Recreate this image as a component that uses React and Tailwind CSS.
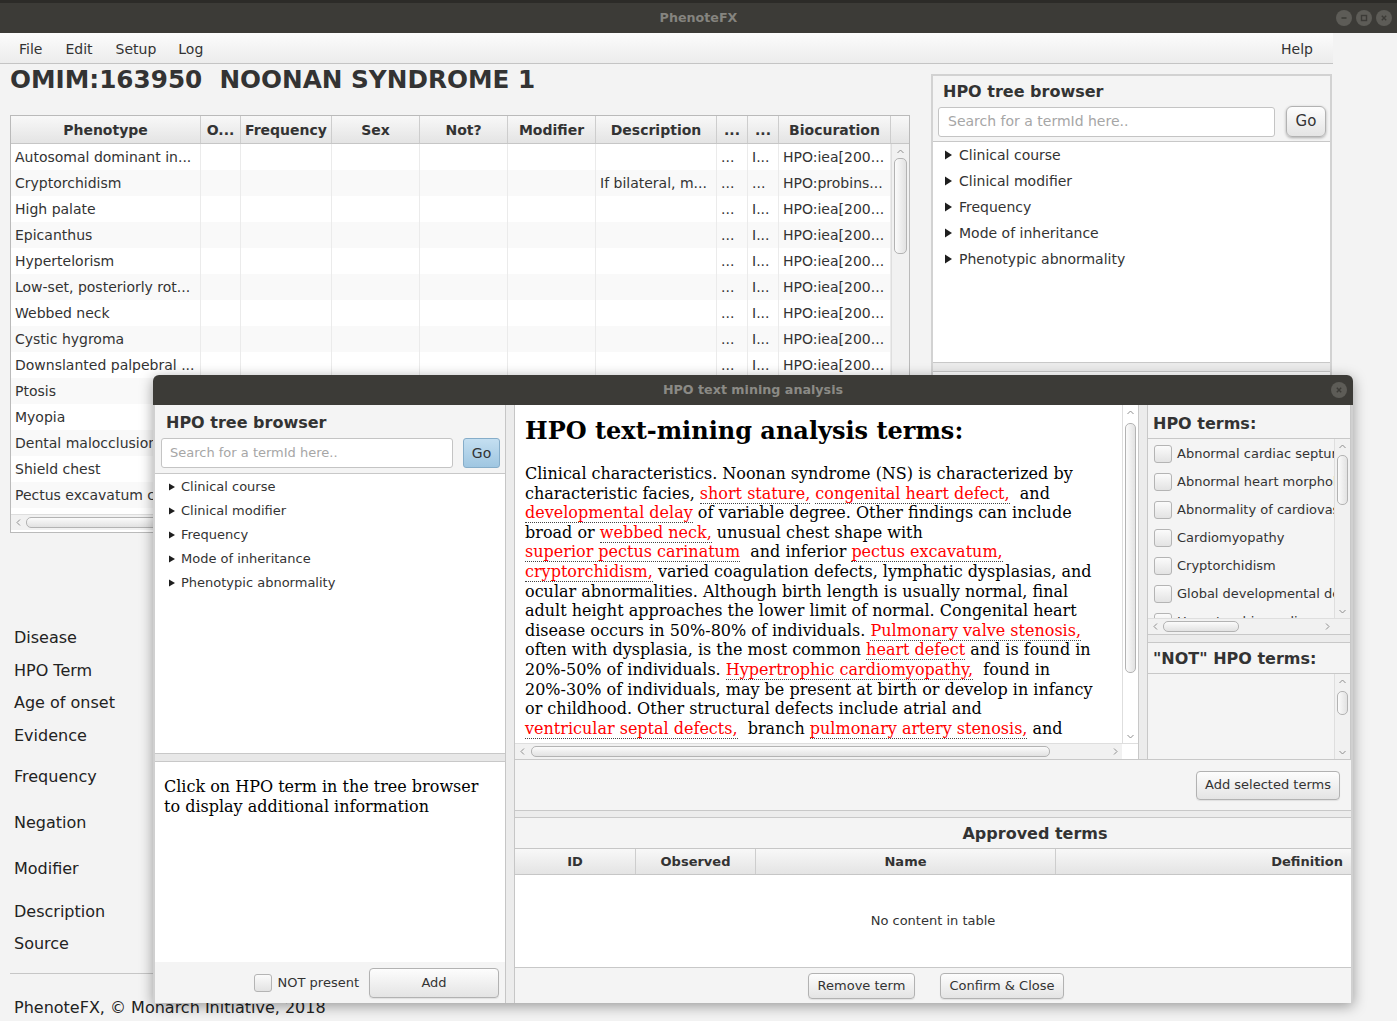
import React from "react";

function Chev({ d, c = "#8f8f8f" }) {
  const p = {
    up: "M1.5 6 L4.5 3 L7.5 6",
    down: "M1.5 3 L4.5 6 L7.5 3",
    left: "M6 1.5 L3 4.5 L6 7.5",
    right: "M3 1.5 L6 4.5 L3 7.5",
  }[d];
  return (
    <svg width="9" height="9" viewBox="0 0 9 9">
      <path d={p} fill="none" stroke={c} strokeWidth="1" />
    </svg>
  );
}

function Tri({ big }) {
  return big ? (
    <svg width="7" height="10" viewBox="0 0 7 10">
      <polygon points="0,0.5 7,5 0,9.5" fill="#1e1e1e" />
    </svg>
  ) : (
    <svg width="6" height="8" viewBox="0 0 6 8">
      <polygon points="0,0.5 6,4 0,7.5" fill="#1e1e1e" />
    </svg>
  );
}

function VScroll({ thumb, cls = "" }) {
  return (
    <div className={`w-[16px] shrink-0 flex flex-col bg-[#f1f1f1] border-l border-[#dedede] ${cls}`}>
      <div className="h-[14px] flex items-center justify-center">
        <Chev d="up" />
      </div>
      <div className="flex-1 px-[2px]">
        <div className={`rounded-[5px] border border-[#b3b3b3] bg-gradient-to-r from-[#fbfbfb] to-[#e2e2e2] ${thumb}`} />
      </div>
      <div className="h-[14px] flex items-center justify-center">
        <Chev d="down" />
      </div>
    </div>
  );
}

function HScroll({ thumb, corner = "bg-[#f1f1f1]", cornerW = "w-[16px]" }) {
  return (
    <div className="h-[16px] shrink-0 flex bg-[#f1f1f1] border-t border-[#dedede]">
      <div className="w-[14px] flex items-center justify-center">
        <Chev d="left" />
      </div>
      <div className="flex-1 min-w-0 py-[2px] overflow-hidden">
        <div className={`h-full rounded-[5px] border border-[#b3b3b3] bg-gradient-to-b from-[#fbfbfb] to-[#e2e2e2] ${thumb}`} />
      </div>
      <div className="w-[14px] flex items-center justify-center">
        <Chev d="right" />
      </div>
      <div className={`${cornerW} shrink-0 ${corner}`} />
    </div>
  );
}

function Circle({ kind }) {
  return (
    <div className="w-[16px] h-[16px] rounded-full bg-[#5d5c57] flex items-center justify-center">
      <svg width="10" height="10" viewBox="0 0 10 10">
        {kind === "min" && <path d="M2.5 5 H7.5" stroke="#3c3b37" strokeWidth="1.6" />}
        {kind === "max" && <rect x="2.5" y="2.5" width="5" height="5" fill="none" stroke="#3c3b37" strokeWidth="1.4" />}
        {kind === "close" && <path d="M2.8 2.8 L7.2 7.2 M7.2 2.8 L2.8 7.2" stroke="#3c3b37" strokeWidth="1.4" />}
      </svg>
    </div>
  );
}

function Checkbox() {
  return (
    <div className="w-[18px] h-[18px] shrink-0 rounded-[3px] border border-[#b4b4b4] bg-gradient-to-b from-[#fbfbfb] to-[#e3e3e3]" />
  );
}

const btn =
  "rounded-[4px] border border-[#b2b2b2] bg-gradient-to-b from-[#fdfdfd] to-[#e4e4e4] shadow-[0_1px_1px_rgba(0,0,0,0.08)] flex items-center justify-center text-[#333] shrink-0";

const colW = [
  "w-[190px]",
  "w-[40px]",
  "w-[91px]",
  "w-[88px]",
  "w-[88px]",
  "w-[88px]",
  "w-[121px]",
  "w-[31px]",
  "w-[31px]",
  "w-[112px]",
];
const headers = ["Phenotype", "O...", "Frequency", "Sex", "Not?", "Modifier", "Description", "...", "...", "Biocuration"];

const rows = [
  ["Autosomal dominant in...", "", "...", "I...", "HPO:iea[200..."],
  ["Cryptorchidism", "If bilateral, m...", "...", "...", "HPO:probins..."],
  ["High palate", "", "...", "I...", "HPO:iea[200..."],
  ["Epicanthus", "", "...", "I...", "HPO:iea[200..."],
  ["Hypertelorism", "", "...", "I...", "HPO:iea[200..."],
  ["Low-set, posteriorly rot...", "", "...", "I...", "HPO:iea[200..."],
  ["Webbed neck", "", "...", "I...", "HPO:iea[200..."],
  ["Cystic hygroma", "", "...", "I...", "HPO:iea[200..."],
  ["Downslanted palpebral ...", "", "...", "I...", "HPO:iea[200..."],
  ["Ptosis", "", "...", "I...", "HPO:iea[200..."],
  ["Myopia", "", "...", "I...", "HPO:iea[200..."],
  ["Dental malocclusion", "", "...", "I...", "HPO:iea[200..."],
  ["Shield chest", "", "...", "I...", "HPO:iea[200..."],
  ["Pectus excavatum c...", "", "...", "I...", "HPO:iea[200..."],
  ["", "", "", "", ""],
];

function MainTable() {
  return (
    <div className="w-[900px] h-[418px] border border-[#bababa] bg-white flex flex-col">
      <div className="h-[28px] shrink-0 flex border-b border-[#c6c6c6] bg-gradient-to-b from-[#f8f8f8] to-[#e4e4e4]">
        {headers.map((h, i) => (
          <div
            key={i}
            className={`${colW[i]} shrink-0 border-r border-[#cdcdcd] flex items-center justify-center pt-[2px] text-[14px] font-bold text-[#333] whitespace-nowrap overflow-hidden`}
          >
            {h}
          </div>
        ))}
        <div className="flex-1" />
      </div>
      <div className="h-[370px] shrink-0 flex">
        <div className="w-[880px] overflow-hidden">
          {rows.map((r, ri) => {
            const cells = [r[0], "", "", "", "", "", r[1], r[2], r[3], r[4]];
            return (
              <div key={ri} className={`h-[26px] flex ${ri % 2 === 0 ? "bg-white" : "bg-[#f9f9f9]"}`}>
                {cells.map((c, ci) => (
                  <div
                    key={ci}
                    className={`${colW[ci]} shrink-0 border-r border-[#ebebeb] pl-[4px] text-[14px] leading-[26px] text-[#333] whitespace-nowrap overflow-hidden`}
                  >
                    {c}
                  </div>
                ))}
              </div>
            );
          })}
        </div>
        <VScroll thumb="h-[96px]" cls="w-[18px]" />
      </div>
      <HScroll thumb="ml-[1px] w-[720px]" cornerW="w-[18px]" />
    </div>
  );
}

function RightPanel() {
  const items = ["Clinical course", "Clinical modifier", "Frequency", "Mode of inheritance", "Phenotypic abnormality"];
  return (
    <div className="mt-[10px] ml-[11px] w-[401px] h-[920px] border-2 border-[#d2d2d2] bg-[#f4f4f4] flex flex-col">
      <div className="h-[30px] flex items-center pl-[10px] pt-[2px] text-[16px] font-bold text-[#333]">HPO tree browser</div>
      <div className="h-[31px] flex items-center pl-[5px]">
        <div className="w-[337px] h-[30px] rounded-[3px] border border-[#c4c4c4] bg-white flex items-center pl-[9px] text-[14px] text-[#a6a6a6]">
          Search for a termId here..
        </div>
        <div className={`${btn} ml-[11px] w-[40px] h-[31px] rounded-[6px] shadow-[0_1px_3px_rgba(0,0,0,0.3)] text-[15px] text-[#111]`}>Go</div>
      </div>
      <div className="mt-[4px] h-[222px] bg-white border-y border-[#c8c8c8]">
        {items.map((t) => (
          <div key={t} className="h-[26px] flex items-center pl-[12px] gap-[7px] text-[14px] text-[#333]">
            <Tri big />
            <span>{t}</span>
          </div>
        ))}
      </div>
      <div className="h-[9px] bg-[#ebebeb] border-b border-[#c8c8c8]" />
      <div className="flex-1 bg-white" />
    </div>
  );
}

function MainWindow() {
  return (
    <div className="w-[1333px]">
      <div className="h-[31px] border-b border-[#c4c4c4] bg-gradient-to-b from-[#fcfcfc] to-[#ececec] flex items-center pt-[2px] text-[14px] text-[#333]">
        <span className="ml-[19px]">File</span>
        <span className="ml-[23px]">Edit</span>
        <span className="ml-[23px]">Setup</span>
        <span className="ml-[22px]">Log</span>
        <span className="ml-auto mr-[20px]">Help</span>
      </div>
      <div className="flex">
        <div className="w-[920px] pl-[10px] shrink-0">
          <div className="h-[30px] leading-[30px] pt-[1px] text-[24.7px] font-bold text-[#333] whitespace-pre">
            OMIM:163950  NOONAN SYNDROME 1
          </div>
          <div className="mt-[21px]">
            <MainTable />
          </div>
          <div className="pl-[4px] text-[16px] leading-[20px] text-[#222]">
            <div className="mt-[95px]">Disease</div>
            <div className="mt-[13px]">HPO Term</div>
            <div className="mt-[12px]">Age of onset</div>
            <div className="mt-[13px]">Evidence</div>
            <div className="mt-[21px]">Frequency</div>
            <div className="mt-[26px]">Negation</div>
            <div className="mt-[26px]">Modifier</div>
            <div className="mt-[23px]">Description</div>
            <div className="mt-[12px]">Source</div>
          </div>
          <div className="mt-[19px] h-px w-[900px] bg-[#c6c6c6]" />
          <div className="mt-[24px] pl-[4px] text-[16px] leading-[20px] text-[#222]">
            PhenoteFX, © Monarch Initiative, 2018
          </div>
        </div>
        <RightPanel />
      </div>
    </div>
  );
}

function R({ children }) {
  return <span className="text-[#ff0000] border-b border-dotted border-[#444]">{children}</span>;
}

function WebView() {
  return (
    <div className="w-[623px] shrink-0 flex flex-col bg-white">
      <div className="flex-1 flex min-h-0">
        <div className="flex-1 min-w-0 overflow-hidden pl-[10px] pt-[11px] font-['DejaVu_Serif',serif] text-black">
          <div className="h-[30px] leading-[30px] text-[24px] font-bold whitespace-nowrap">HPO text-mining analysis terms:</div>
          <div className="mt-[18px] text-[16px] leading-[19.6px] whitespace-pre">
            <div>Clinical characteristics. Noonan syndrome (NS) is characterized by</div>
            <div>
              characteristic facies, <R>short stature,</R> <R>congenital heart defect,</R>{"  and"}
            </div>
            <div>
              <R>developmental delay</R> of variable degree. Other findings can include
            </div>
            <div>
              broad or <R>webbed neck,</R> unusual chest shape with
            </div>
            <div>
              <R>superior pectus carinatum</R>
              {"  and inferior "}
              <R>pectus excavatum,</R>
            </div>
            <div>
              <R>cryptorchidism,</R> varied coagulation defects, lymphatic dysplasias, and
            </div>
            <div>ocular abnormalities. Although birth length is usually normal, final</div>
            <div>adult height approaches the lower limit of normal. Congenital heart</div>
            <div>
              disease occurs in 50%-80% of individuals. <R>Pulmonary valve stenosis,</R>
            </div>
            <div>
              often with dysplasia, is the most common <R>heart defect</R> and is found in
            </div>
            <div>
              20%-50% of individuals. <R>Hypertrophic cardiomyopathy,</R>
              {"  found in"}
            </div>
            <div>20%-30% of individuals, may be present at birth or develop in infancy</div>
            <div>or childhood. Other structural defects include atrial and</div>
            <div>
              <R>ventricular septal defects,</R>
              {"  branch "}
              <R>pulmonary artery stenosis,</R> and
            </div>
          </div>
        </div>
        <VScroll thumb="mt-[4px] h-[250px]" cls="bg-white" />
      </div>
      <HScroll thumb="ml-[2px] w-[519px]" corner="bg-white" />
    </div>
  );
}

function TermsPanel() {
  const terms = [
    "Abnormal cardiac septum morphology",
    "Abnormal heart morphology",
    "Abnormality of cardiovascular system",
    "Cardiomyopathy",
    "Cryptorchidism",
    "Global developmental delay",
    "Hypertrophic cardiomyopathy",
  ];
  return (
    <div className="flex-1 min-w-0 overflow-hidden flex flex-col border-x border-[#c8c8c8] bg-[#f4f4f4]">
      <div className="h-[34px] shrink-0 flex items-center pl-[5px] pt-[4px] text-[16px] font-bold text-[#333] border-b border-[#c8c8c8]">
        HPO terms:
      </div>
      <div className="h-[179px] shrink-0 flex">
        <div className="flex-1 min-w-0 overflow-hidden pt-[1px]">
          {terms.map((t) => (
            <div key={t} className="h-[28px] flex items-center pl-[6px] gap-[5px] text-[13px] text-[#333] whitespace-nowrap">
              <Checkbox />
              <span>{t}</span>
            </div>
          ))}
        </div>
        <VScroll thumb="mt-[2px] h-[50px]" />
      </div>
      <HScroll thumb="ml-[1px] w-[76px]" />
      <div className="h-[9px] shrink-0 bg-[#ececec] border-y border-[#c8c8c8]" />
      <div className="h-[31px] shrink-0 flex items-center pl-[5px] pt-[2px] text-[16px] font-bold text-[#333] border-b border-[#c8c8c8]">
        "NOT" HPO terms:
      </div>
      <div className="flex-1 flex">
        <div className="flex-1" />
        <VScroll thumb="mt-[3px] h-[24px]" />
      </div>
    </div>
  );
}

function Dialog() {
  const tree = ["Clinical course", "Clinical modifier", "Frequency", "Mode of inheritance", "Phenotypic abnormality"];
  return (
    <div className="absolute left-[153px] top-[375px] w-[1200px] h-[628px] flex flex-col rounded-t-[6px] overflow-hidden shadow-[0_3px_14px_rgba(0,0,0,0.38)] bg-[#f4f4f4]">
      <div className="h-[30px] shrink-0 bg-[#3c3b37] grid grid-cols-[1fr_auto_1fr] items-center">
        <div />
        <div className="text-[12.7px] font-bold text-[#8b8a85]">HPO text mining analysis</div>
        <div className="flex justify-end pr-[6px]">
          <Circle kind="close" />
        </div>
      </div>
      <div className="flex-1 min-h-0 flex border-l-2 border-[#d0d0d0]">
        {/* left panel */}
        <div className="w-[350px] shrink-0 flex flex-col">
          <div className="h-[33px] flex items-center pl-[11px] pt-[3px] text-[16px] font-bold text-[#333]">HPO tree browser</div>
          <div className="h-[30px] flex items-center pl-[6px]">
            <div className="w-[292px] h-[30px] rounded-[3px] border border-[#c4c4c4] bg-white flex items-center pl-[8px] text-[13px] text-[#a6a6a6]">
              Search for a termId here..
            </div>
            <div className="ml-[10px] w-[37px] h-[30px] rounded-[3px] border border-[#86adc9] bg-gradient-to-b from-[#c4dff1] to-[#9fc6e1] flex items-center justify-center text-[14px] text-[#333]">
              Go
            </div>
          </div>
          <div className="mt-[5px] h-[280px] bg-white border-t border-[#c8c8c8] pt-[1px]">
            {tree.map((t) => (
              <div key={t} className="h-[24px] flex items-center pl-[14px] gap-[6px] text-[13px] text-[#333]">
                <Tri />
                <span>{t}</span>
              </div>
            ))}
          </div>
          <div className="h-[9px] bg-[#e8e8e8] border-y border-[#c8c8c8]" />
          <div className="h-[200px] bg-white pt-[15px] pl-[9px] font-['DejaVu_Serif',serif] text-[16px] leading-[20px] text-black">
            <div>Click on HPO term in the tree browser</div>
            <div>to display additional information</div>
          </div>
          <div className="flex-1 flex items-center justify-end pr-[6px]">
            <Checkbox />
            <span className="ml-[6px] text-[13px] text-[#333]">NOT present</span>
            <div className={`${btn} ml-[10px] w-[130px] h-[30px] text-[13px]`}>Add</div>
          </div>
        </div>
        {/* divider */}
        <div className="w-[10px] shrink-0 bg-[#ececec] border-x border-[#c6c6c6]" />
        {/* right area */}
        <div className="flex-1 min-w-0 flex flex-col border-r-2 border-[#d0d0d0]">
          <div className="h-[355px] shrink-0 flex border-b border-[#c8c8c8]">
            <WebView />
            <div className="w-[9px] shrink-0 bg-[#ececec] border-l border-[#c8c8c8]" />
            <TermsPanel />
          </div>
          <div className="h-[50px] shrink-0 flex items-center justify-end pr-[11px]">
            <div className={`${btn} w-[144px] h-[29px] text-[13px]`}>Add selected terms</div>
          </div>
          <div className="h-[8px] shrink-0 bg-[#ececec] border-y border-[#c8c8c8]" />
          <div className="h-[30px] shrink-0 flex items-center justify-center pl-[204px] pt-[1px] text-[16px] font-bold text-[#333]">
            Approved terms
          </div>
          <div className="h-[27px] shrink-0 flex border-y border-[#c6c6c6] bg-gradient-to-b from-[#f8f8f8] to-[#e4e4e4] text-[13px] font-bold text-[#333]">
            <div className="w-[121px] shrink-0 border-r border-[#cdcdcd] flex items-center justify-center">ID</div>
            <div className="w-[120px] shrink-0 border-r border-[#cdcdcd] flex items-center justify-center">Observed</div>
            <div className="w-[300px] shrink-0 border-r border-[#cdcdcd] flex items-center justify-center">Name</div>
            <div className="flex-1 flex items-center justify-end pr-[8px]">Definition</div>
          </div>
          <div className="h-[92px] shrink-0 bg-white flex items-center justify-center text-[13px] text-[#333]">
            No content in table
          </div>
          <div className="flex-1 border-t border-[#c8c8c8] flex items-center justify-center gap-[25px] pl-[6px]">
            <div className={`${btn} w-[107px] h-[26px] text-[13px]`}>Remove term</div>
            <div className={`${btn} w-[124px] h-[26px] text-[13px]`}>Confirm &amp; Close</div>
          </div>
        </div>
      </div>
    </div>
  );
}

export default function App() {
  return (
    <div className="w-[1397px] h-[1021px] relative overflow-hidden bg-[#f3f3f3] font-['DejaVu_Sans',sans-serif] text-[#333]">
      <div className="h-[33px] bg-[#3c3b37] border-t-[3px] border-[#2c2b28] grid grid-cols-[1fr_auto_1fr] items-center">
        <div />
        <div className="text-[12.7px] font-bold text-[#85847f]">PhenoteFX</div>
        <div className="flex justify-end gap-[4px] pr-[5px]">
          <Circle kind="min" />
          <Circle kind="max" />
          <Circle kind="close" />
        </div>
      </div>
      <MainWindow />
      <Dialog />
    </div>
  );
}
